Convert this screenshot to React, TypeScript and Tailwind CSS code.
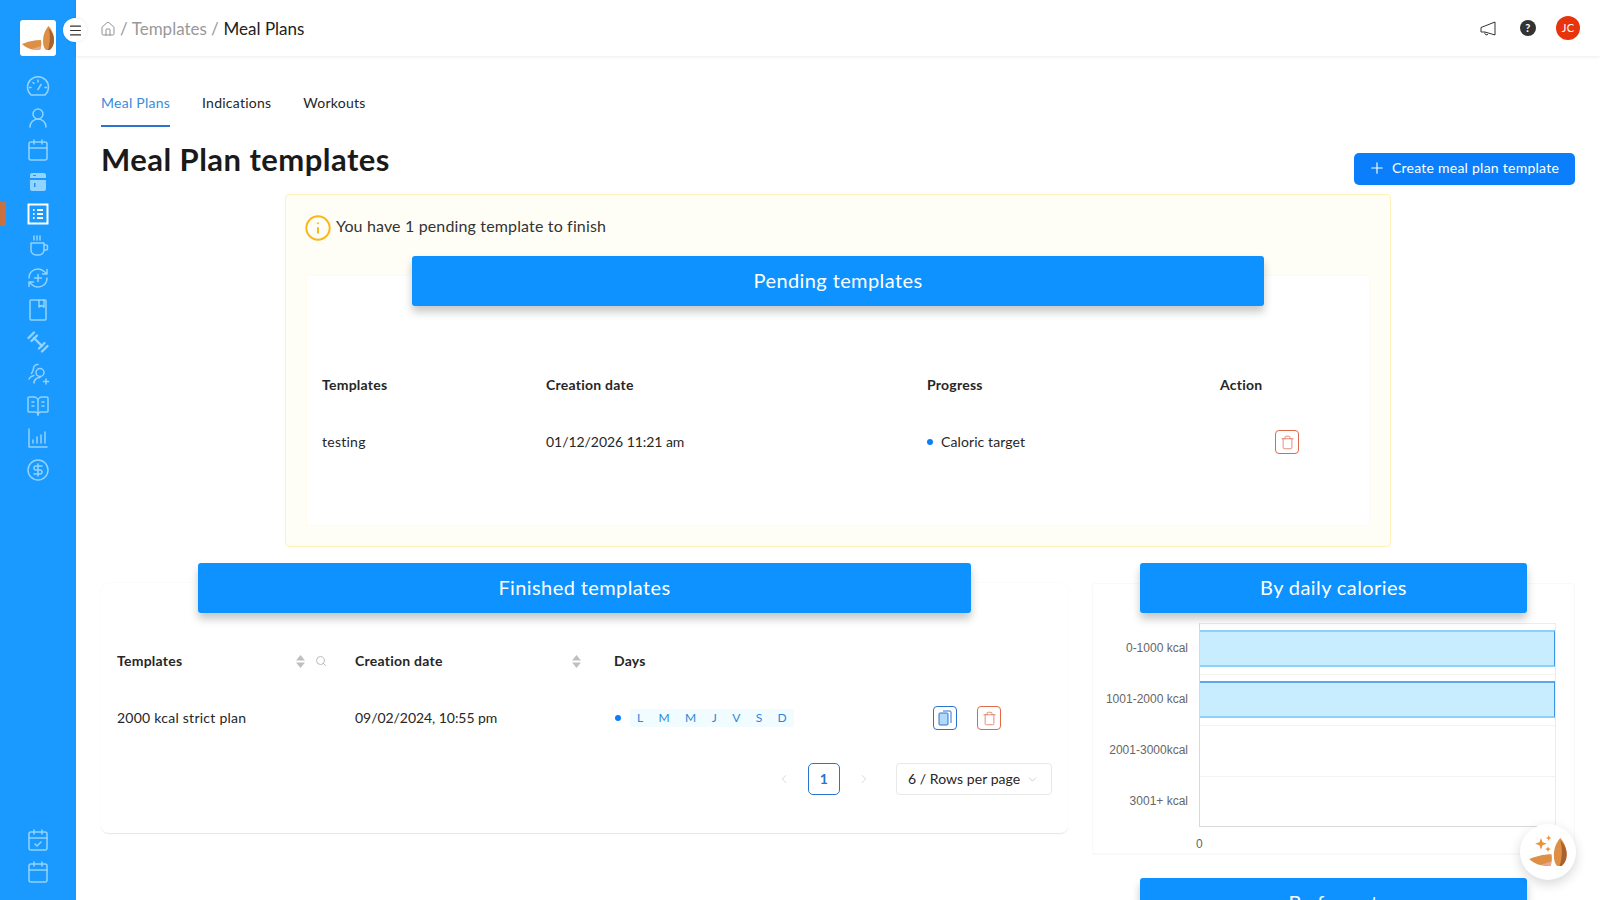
import { BookOpenText, Calendar, CalendarCheck, ChevronDown, ChevronLeft, ChevronRight, CircleDollarSign, Home, Info, Menu, Plus, Search, Trash, UserRound } from 'lucide-react'
import type { ReactNode } from 'react'

function Line({ children }: { children: ReactNode }) {
  return (
    <svg width="24" height="24" viewBox="0 0 24 24" fill="none" stroke="currentColor" strokeWidth="1.5" strokeLinecap="round" strokeLinejoin="round">
      {children}
    </svg>
  )
}

function Almonds({ size, sparkle }: { size: number; sparkle?: boolean }) {
  return (
    <svg width={size} height={size} viewBox="0 0 36 36">
      <path d="M28.500 6c-3.500 4-5.500 9-5.500 15 0 4 1 7.500 3 9h3.500c3-2 4.500-6 4.500-10 0-5-2-10.500-5.500-14z" fill="#dd8f45" />
      <path d="M28.500 8c2 6 2 14-.5 22h1.500c3-2 4.500-6 4.500-10 0-5-2-8-5.500-12z" fill="#a9612f" />
      <path d="M2 24c5-2 12-4 19-4 .5 3 .5 7-1 10-7 0-13-1-18-6z" fill="#dd8f45" />
      <path d="M12 29c3-1 6-2 9-3-.2 1.500-.5 3-1 4-3 0-5-.3-8-1z" fill="#e9a98c" />
      {sparkle && (
        <path d="M12 6l1.300 3.700L17 11l-3.700 1.300L12 16l-1.300-3.700L7 11l3.700-1.300zM18.600 3.500l.7 1.800 1.800.7-1.800.7-.7 1.800-.7-1.800-1.800-.7 1.800-.7zM18 13l.7 1.800 1.800.7-1.800.7-.7 1.800-.7-1.800-1.800-.7 1.800-.7z" fill="#e8913a" />
      )}
    </svg>
  )
}

function SortIcon() {
  return (
    <svg width="9" height="13" viewBox="0 0 9 13" fill="#bfbfbf">
      <path d="M4.500 0L9 5.500H0z" />
      <path d="M4.500 13L0 7.500h9z" />
    </svg>
  )
}

function BarTitle({ children }: { children: ReactNode }) {
  return (
    <div className="relative z-10 mx-auto flex h-[50px] w-[80%] items-center justify-center rounded-[3px] bg-[#0d92ff] pb-[3px] text-[20px] tracking-[0.4px] text-white shadow-[0_6px_8px_rgba(0,0,0,0.22)]">
      {children}
    </div>
  )
}

function TrashButton() {
  return (
    <button className="flex h-6 w-6 items-center justify-center rounded-[4px] border border-[#dd6a4a] text-[#dd6a4a]">
      <Trash size={15} strokeWidth={1.2} />
    </button>
  )
}

const navIcons: ReactNode[] = [
  <Line key="gauge"><g transform="translate(0 1.500)"><path d="M5 19.500a10.500 10.500 0 1 1 14 0z" /><path d="M12 14l3-5M12 4.500v2M5 12H3.500M20.500 12H19M7 7l1 1" /></g></Line>,
  <UserRound key="user" size={24} strokeWidth={1.5} />,
  <Calendar key="cal" size={24} strokeWidth={1.5} />,
  <svg key="fridge" width="24" height="24" viewBox="0 0 24 24" fill="currentColor"><path d="M6 3h12a2 2 0 0 1 2 2v3H4V5a2 2 0 0 1 2-2zM4 10h16v9a2 2 0 0 1-2 2H6a2 2 0 0 1-2-2z" /><path d="M7 5h3v1H7zM8 13h1.500v4H8z" fill="#1a98ff" /></svg>,
  <svg key="list" width="24" height="24" viewBox="0 0 24 24" fill="none" stroke="#fff" strokeWidth="2"><rect x="2.500" y="2.500" width="19" height="19" /><path d="M11 8h6M11 12h6M11 16h6M7 8h1.500M7 12h1.500M7 16h1.500" /></svg>,
  <Line key="coffee"><path d="M8 2v4M11 2v4M14 2v4" /><path d="M5 9h13v7a5 5 0 0 1-5 5h-3a5 5 0 0 1-5-5z" /><path d="M18 11h2a1.500 1.500 0 0 1 1.500 1.500v2A1.500 1.500 0 0 1 20 16h-2" /></Line>,
  <Line key="cycle"><path d="M3 12a9 9 0 0 1 15.500-6.200L21 8M21 3.500V8h-4.500" /><path d="M21 12a9 9 0 0 1-15.500 6.200L3 16M3 20.500V16h4.500" /><path d="M12 8.500v7M8.500 12h7" /></Line>,
  <Line key="book"><rect x="4" y="2" width="16" height="20" rx="1" /><path d="M13 2v7l2.500-1.500L18 9V2" /></Line>,
  <svg key="bell" width="24" height="24" viewBox="0 0 24 24" fill="none" stroke="currentColor" strokeWidth="2.400" strokeLinecap="round"><path d="M8 8l8 8" /><path d="M2.500 8L8 2.500M5.500 11L11 5.500M13 18.500L18.500 13M16 21.500L21.500 16" /></svg>,
  <Line key="people"><circle cx="14" cy="10.500" r="4" /><path d="M8 21c0-3 2.500-5.500 6-5.500M12 2.500a4 4 0 0 0-4.500 4c0 2-1 3-2 5M3 17c1-2 2.500-3 5-3.500" /><path d="M20 17v5M17.500 19.500h5" /></Line>,
  <BookOpenText key="open" size={24} strokeWidth={1.5} />,
  <Line key="chart"><path d="M3 3v18h18M7 17v-3M11 17v-6M15 17V9M19 17V6" /></Line>,
  <CircleDollarSign key="dollar" size={24} strokeWidth={1.5} />,
]

const days = ['L', 'M', 'M', 'J', 'V', 'S', 'D']
const calorieRows = ['0-1000 kcal', '1001-2000 kcal', '2001-3000kcal', '3001+ kcal']

export default function App() {
  return (
    <div className="flex h-[900px] w-[1600px] overflow-hidden bg-white font-['Lato',sans-serif] text-[14px] leading-5 tracking-[0.25px] text-[#262626]">
      {/* Sidebar */}
      <aside className="relative flex w-[76px] shrink-0 flex-col items-center bg-[#1a99ff] pb-3 pt-5 text-[#93d3ff]">
        <div className="flex h-9 w-9 items-center justify-center rounded-[3px] bg-white">
          <Almonds size={36} />
        </div>
        <div className="mt-[14px] flex flex-col">
          {navIcons.map((icon, i) => (
            <div key={i} className="flex h-8 w-8 items-center justify-center">{icon}</div>
          ))}
        </div>
        <div className="absolute left-0 top-[202px] h-6 w-1.5 bg-[#c8703f]" />
        <div className="mt-auto flex flex-col">
          <div className="flex h-8 w-8 items-center justify-center"><CalendarCheck size={24} strokeWidth={1.5} /></div>
          <div className="flex h-8 w-8 items-center justify-center"><Calendar size={24} strokeWidth={1.5} /></div>
        </div>
        <div className="absolute left-[63px] top-[18px] z-20 flex h-6 w-6 items-center justify-center rounded-full bg-white text-[#333] shadow-[0_0_3px_rgba(0,0,0,0.1)]">
          <Menu size={15} strokeWidth={1.8} />
        </div>
      </aside>

      <main className="relative min-w-0 flex-1">
        {/* Top bar */}
        <header className="flex h-14 items-center justify-between pl-6 pr-5 shadow-[0_1px_3px_rgba(0,0,0,0.08)]">
          <div className="flex items-center pt-px text-[17px] tracking-normal">
            <Home size={16} strokeWidth={1.2} className="text-[#777]" />
            <span className="ml-1 text-[#999]">/</span>
            <span className="ml-[4px] text-[#999]">Templates</span>
            <span className="ml-[4px] text-[#999]">/</span>
            <span className="ml-[5px] text-[#222]">Meal Plans</span>
          </div>
          <div className="flex items-center">
            <svg width="16" height="15" viewBox="0 0 16 15" fill="none" stroke="#333" strokeWidth="1" strokeLinejoin="round">
              <path d="M15 1v13L5 11H1V6.500zM5 11.500a1.500 1.500 0 0 0 3 1.500" />
            </svg>
            <div className="ml-[24px] flex h-4 w-4 items-center justify-center rounded-full bg-[#333] text-[11px] font-bold text-white">?</div>
            <div className="ml-[20px] flex h-6 w-6 items-center justify-center rounded-full bg-[#e8340c] text-[11px] text-white">JC</div>
          </div>
        </header>

        <div className="pl-[25px] pr-[25px]">
          {/* Tabs */}
          <nav className="mt-[37px] flex gap-8">
            <div className="border-b-2 border-[#2a74cf] pb-3 text-[#3a8bdb]">Meal Plans</div>
            <div>Indications</div>
            <div>Workouts</div>
          </nav>

          <div className="mt-[15px] flex items-start justify-between">
            <h1 className="-mt-px text-[31px] font-bold leading-9 tracking-[0.45px] text-[#1a1a1a]">Meal Plan templates</h1>
            <button className="mt-[11px] flex h-8 w-[221px] items-center justify-center gap-[6px] rounded-[5px] bg-[#0b7ffb] pb-[2px] pr-[2px] text-white">
              <Plus size={18} strokeWidth={1.5} />
              Create meal plan template
            </button>
          </div>

          {/* Pending templates */}
          <section className="mx-auto mt-[9px] h-[353px] w-[1106px] rounded-[4px] border border-[#fff1b8] bg-[#fffef6] px-5 pt-[21px]">
            <div className="flex h-6 items-center text-[16px] tracking-[0.15px] text-[#333]">
              <Info size={28} strokeWidth={1.7} className="-ml-[2px] text-[#fbb715]" />
              <span className="-mt-[4px] ml-[4px]">You have 1 pending template to finish</span>
            </div>
            <div className="mt-4">
              <BarTitle>Pending templates</BarTitle>
              <div className="-mt-[31px] h-[251px] border border-[#fffcec] bg-white px-[15px] pt-[99px]">
                <div className="grid grid-cols-[224px_381px_293px_1fr] font-bold">
                  <div>Templates</div>
                  <div>Creation date</div>
                  <div>Progress</div>
                  <div>Action</div>
                </div>
                <div className="mt-[35px] grid grid-cols-[224px_381px_293px_1fr] items-center leading-6">
                  <div>testing</div>
                  <div className="tracking-[-0.05px]">01/12/2026 11:21 am</div>
                  <div className="flex items-center">
                    <span className="h-1.5 w-1.5 rounded-full bg-[#0b7ffb]" />
                    <span className="ml-2 tracking-[0.1px]">Caloric target</span>
                  </div>
                  <div className="pl-[55px]"><TrashButton /></div>
                </div>
              </div>
            </div>
          </section>

          <div className="mt-4 grid grid-cols-[967px_483px] gap-x-6">
            {/* Finished templates */}
            <section>
              <BarTitle>Finished templates</BarTitle>
              <div className="-mt-[30px] h-[251px] rounded-lg border-b border-[#e8e8e8] px-4 pt-[68px] shadow-[0_0_2px_rgba(0,0,0,0.05)]">
                <div className="grid grid-cols-[238px_260px_1fr] font-bold">
                  <div className="flex items-center">
                    <span>Templates</span>
                    <span className="ml-auto mr-[28px] flex items-center gap-[10px]">
                      <SortIcon />
                      <Search size={12} className="text-[#bbb]" />
                    </span>
                  </div>
                  <div className="flex items-center">
                    <span>Creation date</span>
                    <span className="ml-auto mr-[34px]"><SortIcon /></span>
                  </div>
                  <div className="-ml-px">Days</div>
                </div>
                <div className="mt-[35px] grid grid-cols-[238px_260px_1fr] items-center leading-6">
                  <div>2000 kcal strict plan</div>
                  <div className="tracking-[-0.05px]">09/02/2024, 10:55 pm</div>
                  <div className="flex items-center">
                    <span className="h-1.5 w-1.5 rounded-full bg-[#0b7ffb]" />
                    <span className="ml-[9px] flex h-[18px] w-[164px] items-center justify-between rounded-[2px] bg-[#f0fcff] px-[7px] text-[12px] text-[#2f86d8]">
                      {days.map((d, i) => <span key={i}>{d}</span>)}
                    </span>
                    <button className="ml-[139px] flex h-6 w-6 items-center justify-center rounded-[4px] border border-[#2a74cf]">
                      <svg width="14" height="16" viewBox="0 0 14 16" fill="none" stroke="#2a74cf" strokeWidth="1">
                        <path d="M5 1h7a1 1 0 0 1 1 1v11" />
                        <rect x="1" y="3" width="9" height="12" rx="1" fill="#b4d8f8" />
                      </svg>
                    </button>
                    <span className="ml-5"><TrashButton /></span>
                  </div>
                </div>
                <div className="mt-[33px] flex items-center justify-end">
                  <ChevronLeft size={14} strokeWidth={1} className="mx-[5px] text-[#bbb]" />
                  <div className="ml-3 flex h-8 w-8 items-center justify-center rounded-[5px] border border-[#2a74cf] font-bold text-[#2a74cf]">1</div>
                  <ChevronRight size={14} strokeWidth={1} className="mx-[5px] ml-[17px] text-[#bbb]" />
                  <div className="ml-5 flex h-8 w-[156px] items-center justify-between rounded-[4px] border border-[#e8e8e8] pl-[11px] pr-3 tracking-[0.05px]">
                    <span>6 / Rows per page</span>
                    <ChevronDown size={13} strokeWidth={1} className="text-[#aaa]" />
                  </div>
                </div>
              </div>
            </section>

            {/* Charts */}
            <section>
              <BarTitle>By daily calories</BarTitle>
              <div className="-mt-[30px] h-[271px] rounded-[3px] border border-[#f9f9f9] pt-[39px] tracking-normal shadow-[0_1px_1px_rgba(0,0,0,0.03)]">
                <div className="flex">
                  <div className="w-[95px] font-['Liberation_Sans',sans-serif] text-[12px] text-[#666]">
                    {calorieRows.map((label) => (
                      <div key={label} className="-mt-px mb-px flex h-[51px] items-center justify-end">{label}</div>
                    ))}
                  </div>
                  <div className="ml-[11px] h-[204px] w-[357px] border-x border-b border-t border-[#ececec] border-b-[#d9d9d9] border-l-[#d9d9d9]">
                    <div className="h-[51px] border-b border-[#f3f3f3] pt-[6px]">
                      <div className="h-[37px] border-y-2 border-r border-[#8fd0fa] border-r-[#3f94e4] bg-[#c7edff]" />
                    </div>
                    <div className="h-[51px] border-b border-[#f3f3f3] pt-[6px]">
                      <div className="h-[37px] border-y-2 border-r border-[#8fd0fa] border-r-[#3f94e4] border-t-[#5aa9ee] bg-[#c7edff]" />
                    </div>
                    <div className="h-[51px] border-b border-[#f3f3f3]" />
                  </div>
                </div>
                <div className="ml-[103px] mt-[7px] font-['Liberation_Sans',sans-serif] text-[12px] text-[#666]">0</div>
              </div>
              <div className="mt-6">
                <BarTitle>By format</BarTitle>
              </div>
            </section>
          </div>
        </div>

        {/* Assistant bubble */}
        <div className="absolute left-[1444px] top-[824px] z-30 flex h-14 w-14 items-center justify-center rounded-full bg-white shadow-[0_4px_12px_rgba(0,0,0,0.16)]">
          <Almonds size={42} sparkle />
        </div>
      </main>
    </div>
  )
}
